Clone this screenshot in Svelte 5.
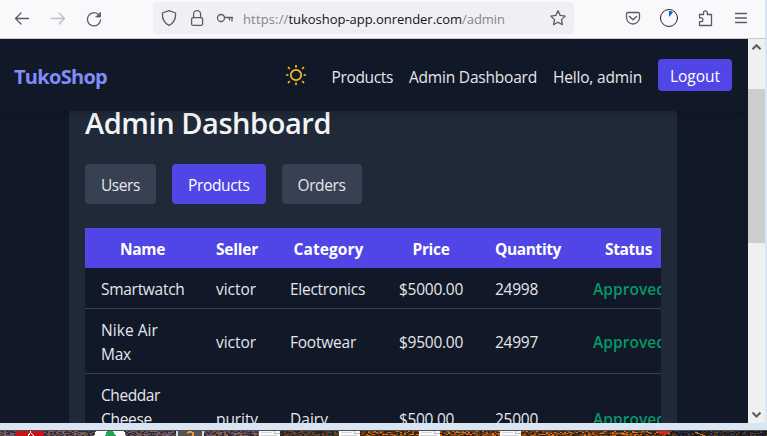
<script>
  const nav = [
    { label: 'Products', w: 61.5 },
    { label: 'Admin Dashboard', w: 128 },
    { label: 'Hello, admin', w: 89 }
  ];
  const tabs = [
    { label: 'Users', w: 39 },
    { label: 'Products', w: 61.5 },
    { label: 'Orders', w: 48 }
  ];
  const columns = [
    { label: 'Name', w: 45 },
    { label: 'Seller', w: 42 },
    { label: 'Category', w: 70 },
    { label: 'Price', w: 37 },
    { label: 'Quantity', w: 66 },
    { label: 'Status', w: 47 }
  ];
  const rows = [
    [[['Smartwatch', 83.5]], ['victor', 40], ['Electronics', 75], ['$5000.00', 64], ['24998', 43], ['Approved', 73]],
    [[['Nike Air', 57], ['Max', 30]], ['victor', 40], ['Footwear', 66], ['$9500.00', 64], ['24997', 43], ['Approved', 73]],
    [[['Cheddar', 59], ['Cheese', 51], ['Block', 38]], ['purity', 42], ['Dairy', 38], ['$500.00', 55], ['25000', 43], ['Approved', 73]]
  ];

  // Wallpaper speckle, grouped by warm and cool regions of the photo
  const cool = ['#4b405a', '#302735', '#5e5579', '#7b5342', '#38302e', '#8a6657'];
  const dusk = ['#342c27', '#152b2b', '#5a3920', '#242326', '#493b2d', '#75472c'];
  const fire = ['#a85214', '#3b2614', '#d47620', '#5e4219', '#782e13', '#292315'];
  const night = ['#171d25', '#273149', '#252217', '#644024', '#111418', '#3c2928'];
  let seed = 17;
  const rand = () => (seed = (seed * 16807) % 2147483647) / 2147483647;
  const specks = [];
  for (let y = 0; y < 5; y++) {
    for (let x = 0; x < 767; x += 2) {
      const set = x < 260 ? cool : x < 340 ? dusk : x < 670 ? fire : night;
      specks.push({ x, y, c: set[Math.floor(rand() * set.length)] });
    }
  }

  // Tracks a label so that it takes up the given width
  function fit(node, width) {
    const gap = (width - node.getBoundingClientRect().width) / node.textContent.length;
    node.style.letterSpacing = `${gap}px`;
  }
</script>

{#snippet label(text, w)}<span class="label" use:fit={w}>{text}</span>{/snippet}

<div class="window">
  <header class="toolbar">
    <svg class="history" width="153" height="38" viewBox="0 0 153 38" fill="none" stroke="#5b5b66" stroke-width="1.3" stroke-linecap="round" stroke-linejoin="round">
      <path d="M28.5 18.5H15.5M21 13l-5.5 5.5L21 24" />
      <path d="M51.5 18.5h13M59 13l5.500 5.500L59 24" stroke="#bdbdc2" />
      <path d="M98.200 14.200A6.600 6.600 0 1 0 100.600 19.800" />
      <path d="M100.500 12.500v4.500h-4.500z" fill="#5b5b66" stroke-width=".8" />
    </svg>
    <div class="urlbar">
      <svg width="90" height="32" viewBox="153 2 90 32" fill="none" stroke="#5b5b66" stroke-width="1.3" stroke-linecap="round" stroke-linejoin="round">
        <path d="M169 10.600l6.600 2.400c.2 6-1.500 10.200-6.600 12.400-5.100-2.200-6.800-6.400-6.600-12.400z" />
        <rect x="191.600" y="17.600" width="11" height="7.800" rx="1.500" />
        <path d="M193.600 17.500v-3.400a3.500 3.500 0 0 1 7 0v3.400" />
        <circle cx="221" cy="18" r="3.500" />
        <path d="M224.500 17.500h8M229.500 18v2M232 18v3" />
      </svg>
      <div class="url">
        <span class="dim">{@render label('https://', 45.5)}</span><span>{@render label('tukoshop-app.onrender.com', 173.5)}</span><span class="dim">{@render label('/admin', 43)}</span>
      </div>
      <svg class="star" width="30" height="32" viewBox="543 2 30 32" fill="none" stroke="#5b5b66" stroke-width="1.3" stroke-linejoin="round">
        <path d="M558 10.800l2.200 4.600 5 .7-3.700 3.500.9 5.100-4.400-2.500-4.400 2.500.9-5.100-3.700-3.500 5-.7z" />
      </svg>
    </div>
    <svg class="actions" width="191" height="38" viewBox="574 0 191 38" fill="none" stroke="#5b5b66" stroke-width="1.3" stroke-linecap="round" stroke-linejoin="round">
      <path d="M628 12.500h10q1.500 0 1.500 1.500v3.500a6.500 6.500 0 0 1-13 0V14q0-1.500 1.500-1.500z" />
      <path d="M629.500 16.500l3.500 3.200 3.500-3.200" stroke-width="1.500" />
      <circle cx="669" cy="18" r="8.500" stroke="#25252d" stroke-width="1" />
      <path d="M669 17v-6a7 7 0 0 1 4 1.300z" fill="#0060df" stroke="none" />
      <path d="M699.500 14.500h4v-1.800a1.900 1.900 0 0 1 3.800 0v1.800h4.200v11h-12v-3.800h1.500a1.900 1.900 0 0 0 0-3.800h-1.500z" />
      <path d="M735.500 13.500h11M735.500 18h11M735.500 22.500h11" />
    </svg>
  </header>

  <div class="viewport">
    <div class="page">
      <nav class="navbar">
        <div class="brand">{@render label('TukoShop', 93)}</div>
        <div class="links">
          <svg width="22" height="22" viewBox="0 0 22 22" fill="none" stroke="#fbbf24" stroke-width="1.700">
            <circle cx="11" cy="11" r="5.200" />
            <path d="M11 1v2.400M11 18.600V21M1 11h2.400M18.600 11H21M3 3l1.800 1.800M17.200 17.200l1.800 1.800M3 19l1.800-1.800M17.200 4.800l1.800-1.800" />
          </svg>
          {#each nav as item}<span>{@render label(item.label, item.w)}</span>{/each}
          <button class="logout">{@render label('Logout', 50)}</button>
        </div>
      </nav>
      <main class="card">
        <h1>{@render label('Admin Dashboard', 246)}</h1>
        <div class="tabs">
          {#each tabs as tab, i}
            <button class="tab" class:active={i === 1}>{@render label(tab.label, tab.w)}</button>
          {/each}
        </div>
        <div class="scroller">
          <table>
            <colgroup>
              <col class="c1" /><col class="c2" /><col class="c3" /><col class="c4" /><col class="c5" /><col class="c6" />
            </colgroup>
            <thead>
              <tr>{#each columns as col}<th>{@render label(col.label, col.w)}</th>{/each}</tr>
            </thead>
            <tbody>
              {#each rows as [name, ...cells]}
                <tr>
                  <td>{#each name as line}<div>{@render label(line[0], line[1])}</div>{/each}</td>
                  {#each cells as cell, i}
                    <td class:approved={i === 4}>{@render label(cell[0], cell[1])}</td>
                  {/each}
                </tr>
              {/each}
            </tbody>
          </table>
        </div>
      </main>
    </div>
    <div class="scrollbar">
      <svg width="17" height="50" viewBox="0 0 17 50" fill="none" stroke="#606060" stroke-width="2.200"><path d="M4.500 10.300l4-4 4 4" /></svg>
      <div class="thumb"></div>
      <svg class="down" width="17" height="17" viewBox="0 0 17 17" fill="none" stroke="#606060" stroke-width="2.200"><path d="M4.500 6.500l4 4 4-4" /></svg>
    </div>
  </div>

  <div class="frame"></div>
  <svg class="desktop" width="767" height="5" viewBox="0 0 767 5" shape-rendering="crispEdges">
    {#each specks as s}<rect x={s.x} y={s.y} width="2" height="1" fill={s.c} />{/each}
    <rect x="16" width="28" height="5" fill="#c81418" />
    <path d="M30 0v2l-2 3M31 2l3 3" stroke="#fff" stroke-width="1" fill="none" />
    <path d="M96 0h28l2 5H94z" fill="#fff" />
    <path d="M107 0h6l3 5h-11z" fill="#26a35a" />
    <rect x="176" width="28" height="5" fill="#ddd" />
    <rect x="178" width="24" height="5" fill="#555" />
    <path d="M187 2q3-2 6 0v3" stroke="#e99a38" stroke-width="2" fill="none" />
    {#each [259, 339, 419, 500] as x}
      <rect {x} width="21" height="5" fill="#f8f8f8" />
      <path d="M{x + 15} 0v2h6" stroke="#bbb" fill="none" />
      <path d="M{x + 2} 1.500h11M{x + 2} 4.500h16" stroke="#d3d6da" />
    {/each}
    <path d="M657 0h13l-3 3h-8z" fill="#dc251b" />
    <path d="M695 1l10 4" stroke="#dc7b2d" />
  </svg>
</div>

<style>
  .window {
    display: flex;
    flex-direction: column;
    width: 767px;
    height: 436px;
    overflow: hidden;
    background: #d9e5f2;
    font-family: "Open Sans", "Noto Sans", sans-serif;
    font-size: 15.5px;
    line-height: 24px;
    color: #e5e7eb;
  }
  svg { display: block; flex: none; }
  .label { display: inline-block; white-space: nowrap; }
  .toolbar {
    display: flex;
    flex: none;
    box-sizing: border-box;
    height: 39px;
    background: #f9f9fb;
    border-bottom: 1px solid #c5cccf;
    border-right: 2px solid #d9e5f2;
  }
  .urlbar {
    display: flex;
    flex: none;
    width: 421px;
    height: 32px;
    margin-top: 2px;
    border-radius: 4px;
    background: #f0f0f4;
  }
  .url {
    display: flex;
    align-items: center;
    font-size: 13px;
    color: #15141a;
    height: 34px;
    white-space: nowrap;
  }
  .dim { color: #84848b; }
  .star { margin-left: auto; margin-right: 1px; }
  .viewport { display: flex; flex: none; width: 765px; height: 384px; overflow: hidden; }
  .page { width: 748px; height: 384px; background: #111827; overflow: hidden; }
  .navbar {
    position: relative;
    display: flex;
    align-items: center;
    justify-content: space-between;
    box-sizing: border-box;
    height: 72px;
    padding: 0 16px 0 14px;
    background: #111827;
    box-shadow: 0 4px 6px -1px #0000001a, 0 2px 4px -2px #0000001a;
  }
  .brand { font-size: 20px; font-weight: 700; color: #818cf8; padding-top: 3px; }
  .links { display: flex; align-items: center; gap: 16px; }
  .links > span { padding-top: 3px; }
  .links > svg { margin-right: 9px; }
  button {
    font: inherit;
    border: 0;
    color: #fff;
    white-space: nowrap;
    border-radius: 4px;
  }
  .logout { width: 74px; height: 32px; padding: 2px 0 0 12px; text-align: left; background: #4f46e5; }
  .card {
    width: 576px;
    height: 330px;
    margin-left: 69px;
    padding: 0 16px;
    background: #1f2937;
  }
  h1 {
    margin: -6px 0 23px;
    font-size: 29px;
    line-height: 36px;
    font-weight: 600;
    color: #f3f4f6;
  }
  .tabs { display: flex; gap: 16px; }
  .tab { height: 40px; padding: 1px 16px 0; background: #374151; color: #e5e7eb; }
  .tab.active { background: #4f46e5; color: #fff; }
  .scroller { margin-top: 24px; overflow: hidden; }
  table { width: 595px; table-layout: fixed; border-collapse: separate; border-spacing: 0; background: #111827; }
  .c1 { width: 115px; }
  .c2 { width: 74px; }
  .c3 { width: 109px; }
  .c4 { width: 96px; }
  .c5 { width: 98px; }
  .c6 { width: 103px; }
  th { height: 40px; box-sizing: border-box; padding: 9px 0 7px; background: #4f46e5; color: #fff; font-weight: 700; }
  td { padding: 9px 0 7px 16px; border-bottom: 1px solid #374151; vertical-align: middle; }
  th .label, td .label { vertical-align: top; }
  .approved { color: #059669; font-weight: 600; }
  .scrollbar { display: flex; flex-direction: column; width: 17px; background: #f0f0f0; }
  .thumb { height: 154px; background: #cdcdcd; }
  .down { margin-top: auto; }
  .frame { flex: none; height: 7px; box-sizing: content-box; border-bottom: 1px solid #4c5055; }
</style>
